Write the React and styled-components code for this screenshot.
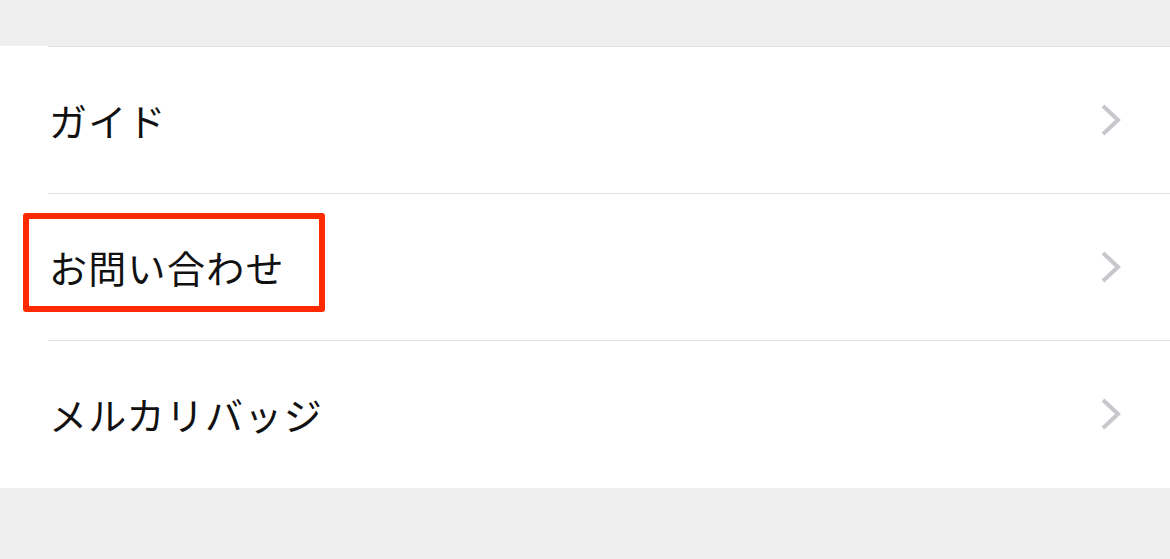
import React from "react";
import styled, { createGlobalStyle } from "styled-components";

const GlobalStyle = createGlobalStyle`
  html, body {
    margin: 0;
    padding: 0;
    background: #efefef;
  }
  body {
    font-family: "Noto Sans CJK JP", "Noto Sans", sans-serif;
  }
`;

const Page = styled.div`
  width: 1170px;
  height: 559px;
  background: #efefef;
  padding-top: 46px;
  box-sizing: border-box;
`;

const List = styled.ul`
  list-style: none;
  margin: 0;
  padding: 0 0 1px;
  background: #ffffff;
`;

const Row = styled.li`
  position: relative;
  height: 147px;
  box-sizing: border-box;
  padding: 0 48px;
  display: flex;
  align-items: center;
  justify-content: space-between;

  &::before {
    content: "";
    position: absolute;
    top: 0;
    left: 48px;
    right: 0;
    height: 1px;
    background: #e0e0e0;
  }
`;

const Label = styled.span`
  font-size: 38px;
  color: #111;
  letter-spacing: 1.3px;
  padding-left: 1px;
`;

const Highlight = styled.div`
  position: absolute;
  left: 23px;
  top: 20px;
  width: 302px;
  height: 99px;
  box-sizing: border-box;
  border: 6px solid #ff2a00;
  border-radius: 3px;
  pointer-events: none;
`;

const Chevron = () => (
  <svg width="22" height="34" viewBox="0 0 22 34">
    <path d="M3 3 L18 17 L3 31" fill="none" stroke="#c8c7cc" strokeWidth="4" />
  </svg>
);

const items = [
  { label: "ガイド" },
  { label: "お問い合わせ", marked: true },
  { label: "メルカリバッジ" },
];

const App = () => {
  return (
    <Page>
      <GlobalStyle />
      <List>
        {items.map((item) => (
          <Row key={item.label}>
            <Label>{item.label}</Label>
            <Chevron />
            {item.marked && <Highlight />}
          </Row>
        ))}
      </List>
    </Page>
  );
};

export default App;
